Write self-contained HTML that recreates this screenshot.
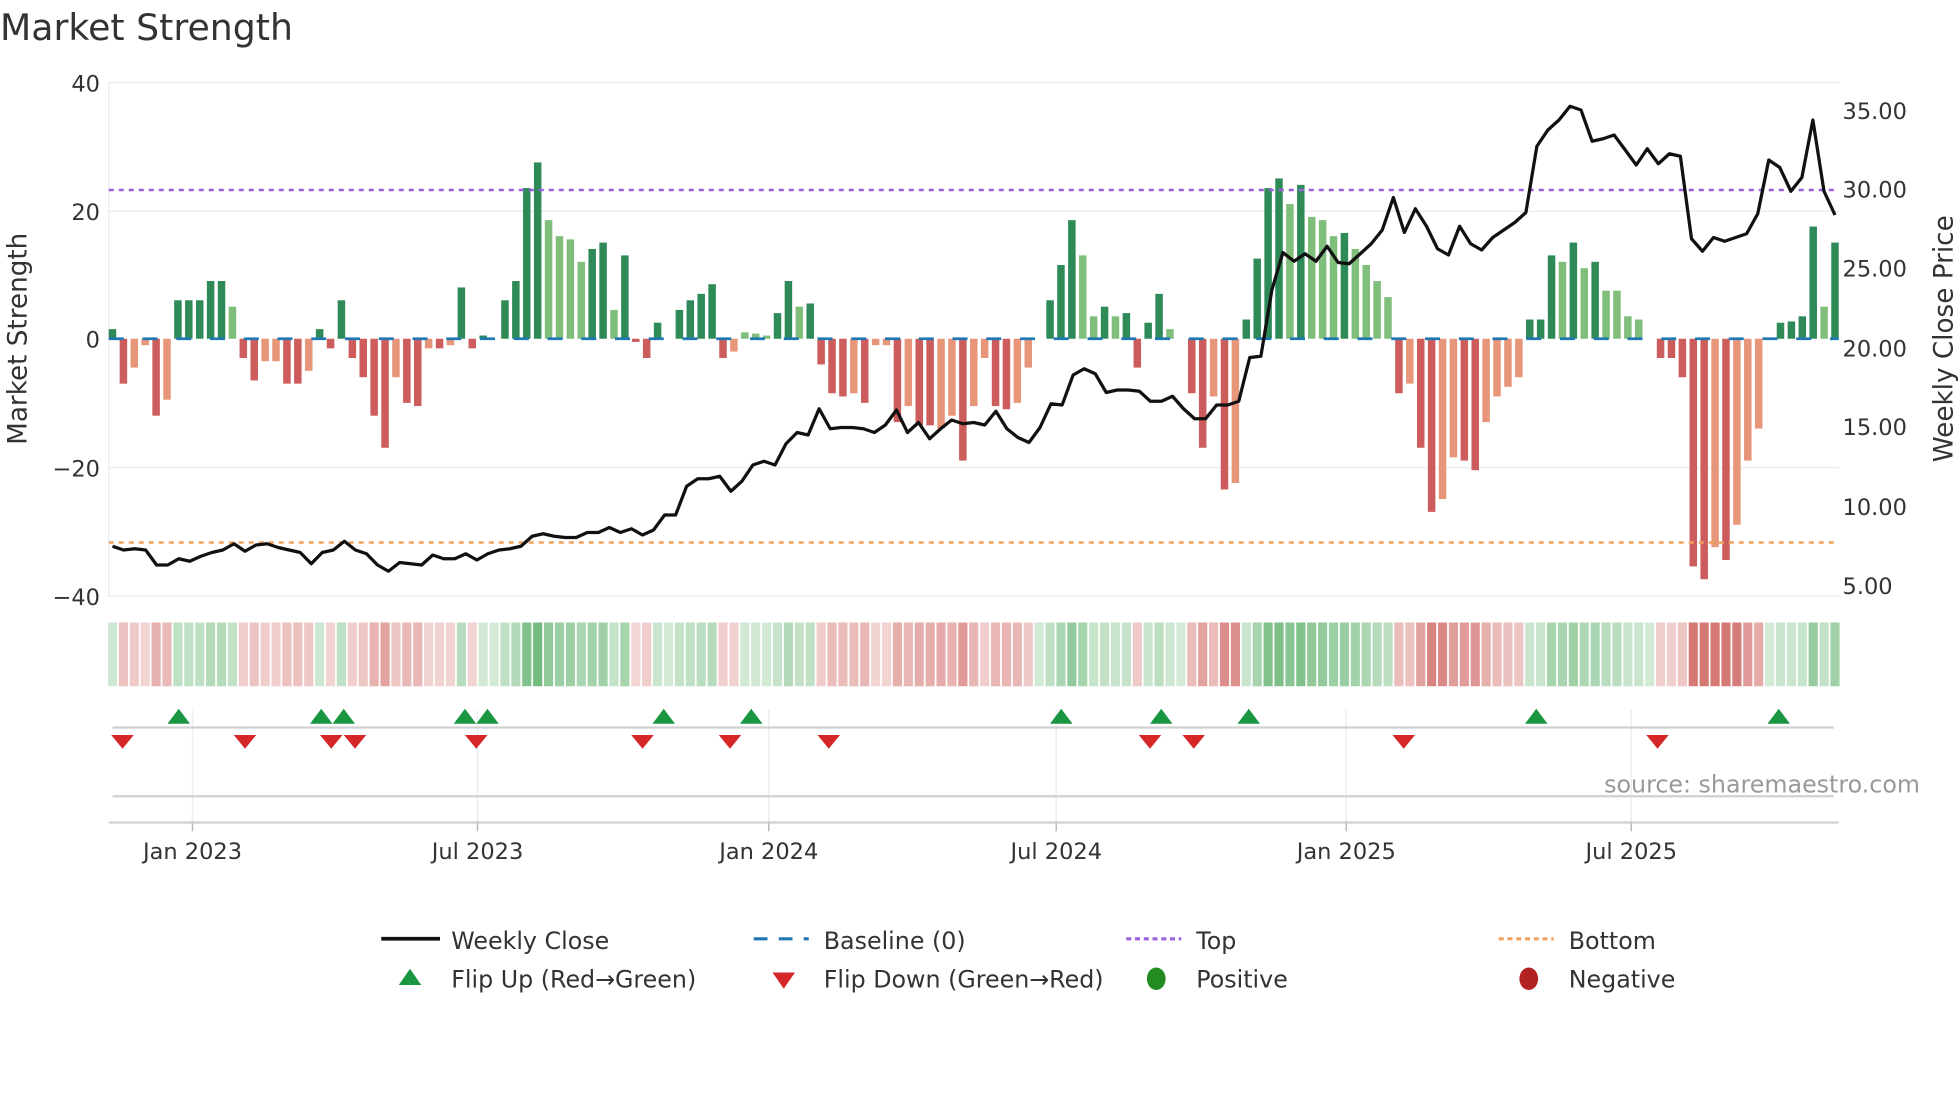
<!DOCTYPE html>
<html><head><meta charset="utf-8">
<style>
html,body{margin:0;padding:0;background:#fff;}
svg{display:block;font-family:"DejaVu Sans","Liberation Sans",sans-serif;}
</style></head>
<body>
<svg id="s" width="1960" height="1102" viewBox="0 0 1568 881.6" xmlns="http://www.w3.org/2000/svg">
<rect width="1568" height="882" fill="#fff"/>
<text x="0" y="32" font-size="29" fill="#333">Market Strength</text>
<g stroke="#eceef5" stroke-width="1.2">
<line x1="87" y1="66" x2="1471" y2="66"/>
<line x1="87" y1="169" x2="1471" y2="169"/>
<line x1="87" y1="374" x2="1471" y2="374"/>
<line x1="87" y1="477" x2="1471" y2="477"/>
<line x1="87" y1="66" x2="87" y2="477"/>
</g>
<g font-size="18" fill="#333" text-anchor="end">
<text x="80" y="73">40</text>
<text x="80" y="176">20</text>
<text x="80" y="278">0</text>
<text x="80" y="381">−20</text>
<text x="80" y="484">−40</text>
</g>
<g font-size="18" fill="#333">
<text x="1474" y="95">35.00</text>
<text x="1474" y="158">30.00</text>
<text x="1474" y="221">25.00</text>
<text x="1474" y="285">20.00</text>
<text x="1474" y="348">15.00</text>
<text x="1474" y="412">10.00</text>
<text x="1474" y="475">5.00</text>
</g>
<text transform="translate(21,271) rotate(-90)" text-anchor="middle" font-size="21" fill="#333">Market Strength</text>
<text transform="translate(1562,271) rotate(-90)" text-anchor="middle" font-size="21" fill="#333">Weekly Close Price</text>
<g id="bars"></g>
<line x1="87" y1="152" x2="1471" y2="152" stroke="#9b5fe0" stroke-width="2" stroke-dasharray="4,4"/>
<line x1="87" y1="434" x2="1471" y2="434" stroke="#f0a35e" stroke-width="2" stroke-dasharray="4,4"/>
<g id="base"></g>
<polyline id="price" fill="none" stroke="#111" stroke-width="2.6" stroke-linejoin="round"/>
<g id="strip"></g>
<g stroke="#eceef5" stroke-width="1.2">
<line x1="154" y1="568" x2="154" y2="658"/><line x1="382" y1="568" x2="382" y2="658"/>
<line x1="615" y1="568" x2="615" y2="658"/><line x1="845" y1="568" x2="845" y2="658"/>
<line x1="1077" y1="568" x2="1077" y2="658"/><line x1="1305" y1="568" x2="1305" y2="658"/>
</g>
<line x1="90" y1="582" x2="1467" y2="582" stroke="#d0d0d0" stroke-width="1.8"/>
<line x1="90" y1="637" x2="1467" y2="637" stroke="#d0d0d0" stroke-width="1.8"/>
<line x1="87" y1="658" x2="1471" y2="658" stroke="#d0d0d0" stroke-width="1.8"/>
<g stroke="#bbb" stroke-width="1.2">
<line x1="154" y1="658" x2="154" y2="665"/><line x1="382" y1="658" x2="382" y2="665"/>
<line x1="615" y1="658" x2="615" y2="665"/><line x1="845" y1="658" x2="845" y2="665"/>
<line x1="1077" y1="658" x2="1077" y2="665"/><line x1="1305" y1="658" x2="1305" y2="665"/>
</g>
<g id="tri"></g>
<text x="1536" y="634" text-anchor="end" font-size="19" fill="#999">source: sharemaestro.com</text>
<g font-size="18" fill="#333" text-anchor="middle">
<text x="154" y="687">Jan 2023</text><text x="382" y="687">Jul 2023</text>
<text x="615" y="687">Jan 2024</text><text x="845" y="687">Jul 2024</text>
<text x="1077" y="687">Jan 2025</text><text x="1305" y="687">Jul 2025</text>
</g>
<g font-size="19" fill="#333">
<line x1="305" y1="751" x2="352" y2="751" stroke="#111" stroke-width="3"/>
<text x="361" y="759">Weekly Close</text>
<line x1="603" y1="751" x2="647" y2="751" stroke="#1f77b4" stroke-width="2.5" stroke-dasharray="11,9"/>
<text x="659" y="759">Baseline (0)</text>
<line x1="901" y1="751" x2="945" y2="751" stroke="#9b5fe0" stroke-width="2.5" stroke-dasharray="4,3"/>
<text x="957" y="759">Top</text>
<line x1="1199" y1="751" x2="1243" y2="751" stroke="#f0a35e" stroke-width="2.5" stroke-dasharray="4,3"/>
<text x="1255" y="759">Bottom</text>
<polygon points="319,788 337,788 328,775" fill="#1a9641"/>
<text x="361" y="790">Flip Up (Red→Green)</text>
<polygon points="618,778 636,778 627,791" fill="#d62728"/>
<text x="659" y="790">Flip Down (Green→Red)</text>
<ellipse cx="925" cy="783" rx="7.5" ry="9" fill="#228b22"/>
<text x="957" y="790">Positive</text>
<ellipse cx="1223" cy="783" rx="7.5" ry="9" fill="#b22222"/>
<text x="1255" y="790">Negative</text>
</g>
</svg>
<script>
(function(){
var NS="http://www.w3.org/2000/svg";
function el(t,a,p){var e=document.createElementNS(NS,t);for(var k in a)e.setAttribute(k,a[k]);p.appendChild(e);return e;}
var B="1.5,-7,-4.5l,-1l,-12,-9.5l,6,6,6,9,9,5l,-3,-6.5,-3.5l,-3.5l,-7,-7,-5l,1.5,-1.5,6,-3,-6,-12,-17,-6l,-10,-10.5,-1.5l,-1.5,-1l,8,-1.5,0.5,0,6,9,23.5,27.5,18.5l,16l,15.5l,12l,14,15,4.5l,13,-0.5,-3,2.5,0,4.5,6,7,8.5,-3,-2l,1l,0.8l,0.5l,4,9,5l,5.5,-4,-8.5,-9,-8.5l,-10,-1l,-1l,-13,-10.5l,-13.5,-13.5,-14l,-12l,-19,-10.5l,-3l,-10.5,-11,-10l,-4.5l,0,6,11.5,18.5,13l,3.5l,5,3.5l,4,-4.5,2.5,7,1.5l,0,-8.5,-17,-9l,-23.5,-22.5l,3,12.5,23.5,25,21l,24,19l,18.5l,16l,16.5,14l,11.5l,9l,6.5l,-8.5,-7l,-17,-27,-25l,-18.5l,-19,-20.5,-13l,-9l,-7.5l,-6l,3,3,13,12l,15,11l,12,7.5l,7.5l,3.5l,3l,0,-3,-3,-6,-35.5,-37.5,-32.5l,-34.5,-29l,-19l,-14l,0,2.5,2.7,3.5,17.5,5l,15".split(",");
var n=B.length,x0=90,x1=1468,dx=(x1-x0)/(n-1);
var bars=document.getElementById("bars"),strip=document.getElementById("strip"),base=document.getElementById("base");
function Y(v){return 271-v*5.13;}
for(var i=0;i<n;i++){
 var s=B[i],l=s.indexOf("l")>=0,v=parseFloat(s),x=x0+i*dx;
 var c=v>=0?(l?"#7fbf7b":"#2e8b57"):(l?"#e8967a":"#cd5c5c");
 if(Math.abs(v)>0.05){var y=Math.min(Y(v),271),h=Math.abs(v)*5.13;el("rect",{x:x-3,y:y,width:6,height:h,fill:c},bars);}
 var m=Math.min(Math.abs(v)/30,1),a=0.25+0.6*m;
 var sc=v>=0?"rgba(80,170,95,"+a+")":"rgba(200,80,75,"+(a*0.9)+")";
 el("rect",{x:x-dx/2+0.7,y:498,width:dx-1.4,height:51,fill:sc},strip);
}
el("line",{x1:87,y1:271,x2:1471,y2:271,stroke:"#1f77b4","stroke-width":2.2,"stroke-dasharray":"12,15"},base);
var P=[437,440,439,440,452,452,447,449,445,442,440,435,441,436,435,438,440,442,451,442,440,433,440,443,452,457,450,451,452,444,447,447,443,448,443,440,439,437,429,427,429,430,430,426,426,422,426,423,428,424,412,412,389,383,383,381,393,385,372,369,372,355,346,348,327,343,342,342,343,346,340,328,346,338,351,343,336,339,338,340,329,343,350,354,342,323,324,300,295,299,314,312,312,313,321,321,317,327,335,335,324,324,321,286,285,232,202,209,203,209,197,210,211,203,195,184,158,186,167,181,199,204,181,195,200,190,184,178,170,117,104,96,85,88,113,111,108,120,132,119,131,123,125,191,201,190,193,190,187,171,128,134,153,142,96,153,172];
var pn=P.length,pd=(1468-90)/(pn-1),pts=[];
for(var j=0;j<pn;j++)pts.push((90+j*pd).toFixed(1)+","+P[j]);
document.getElementById("price").setAttribute("points",pts.join(" "));
var tri=document.getElementById("tri");
[143,257,275,372,390,531,601,849,929,999,1229,1423].forEach(function(x){el("polygon",{points:(x-9)+",579 "+(x+9)+",579 "+x+",567",fill:"#1a9641"},tri);});
[98,196,265,284,381,514,584,663,920,955,1123,1326].forEach(function(x){el("polygon",{points:(x-9)+",588 "+(x+9)+",588 "+x+",599",fill:"#d62728"},tri);});
})();
</script>
</body></html>
